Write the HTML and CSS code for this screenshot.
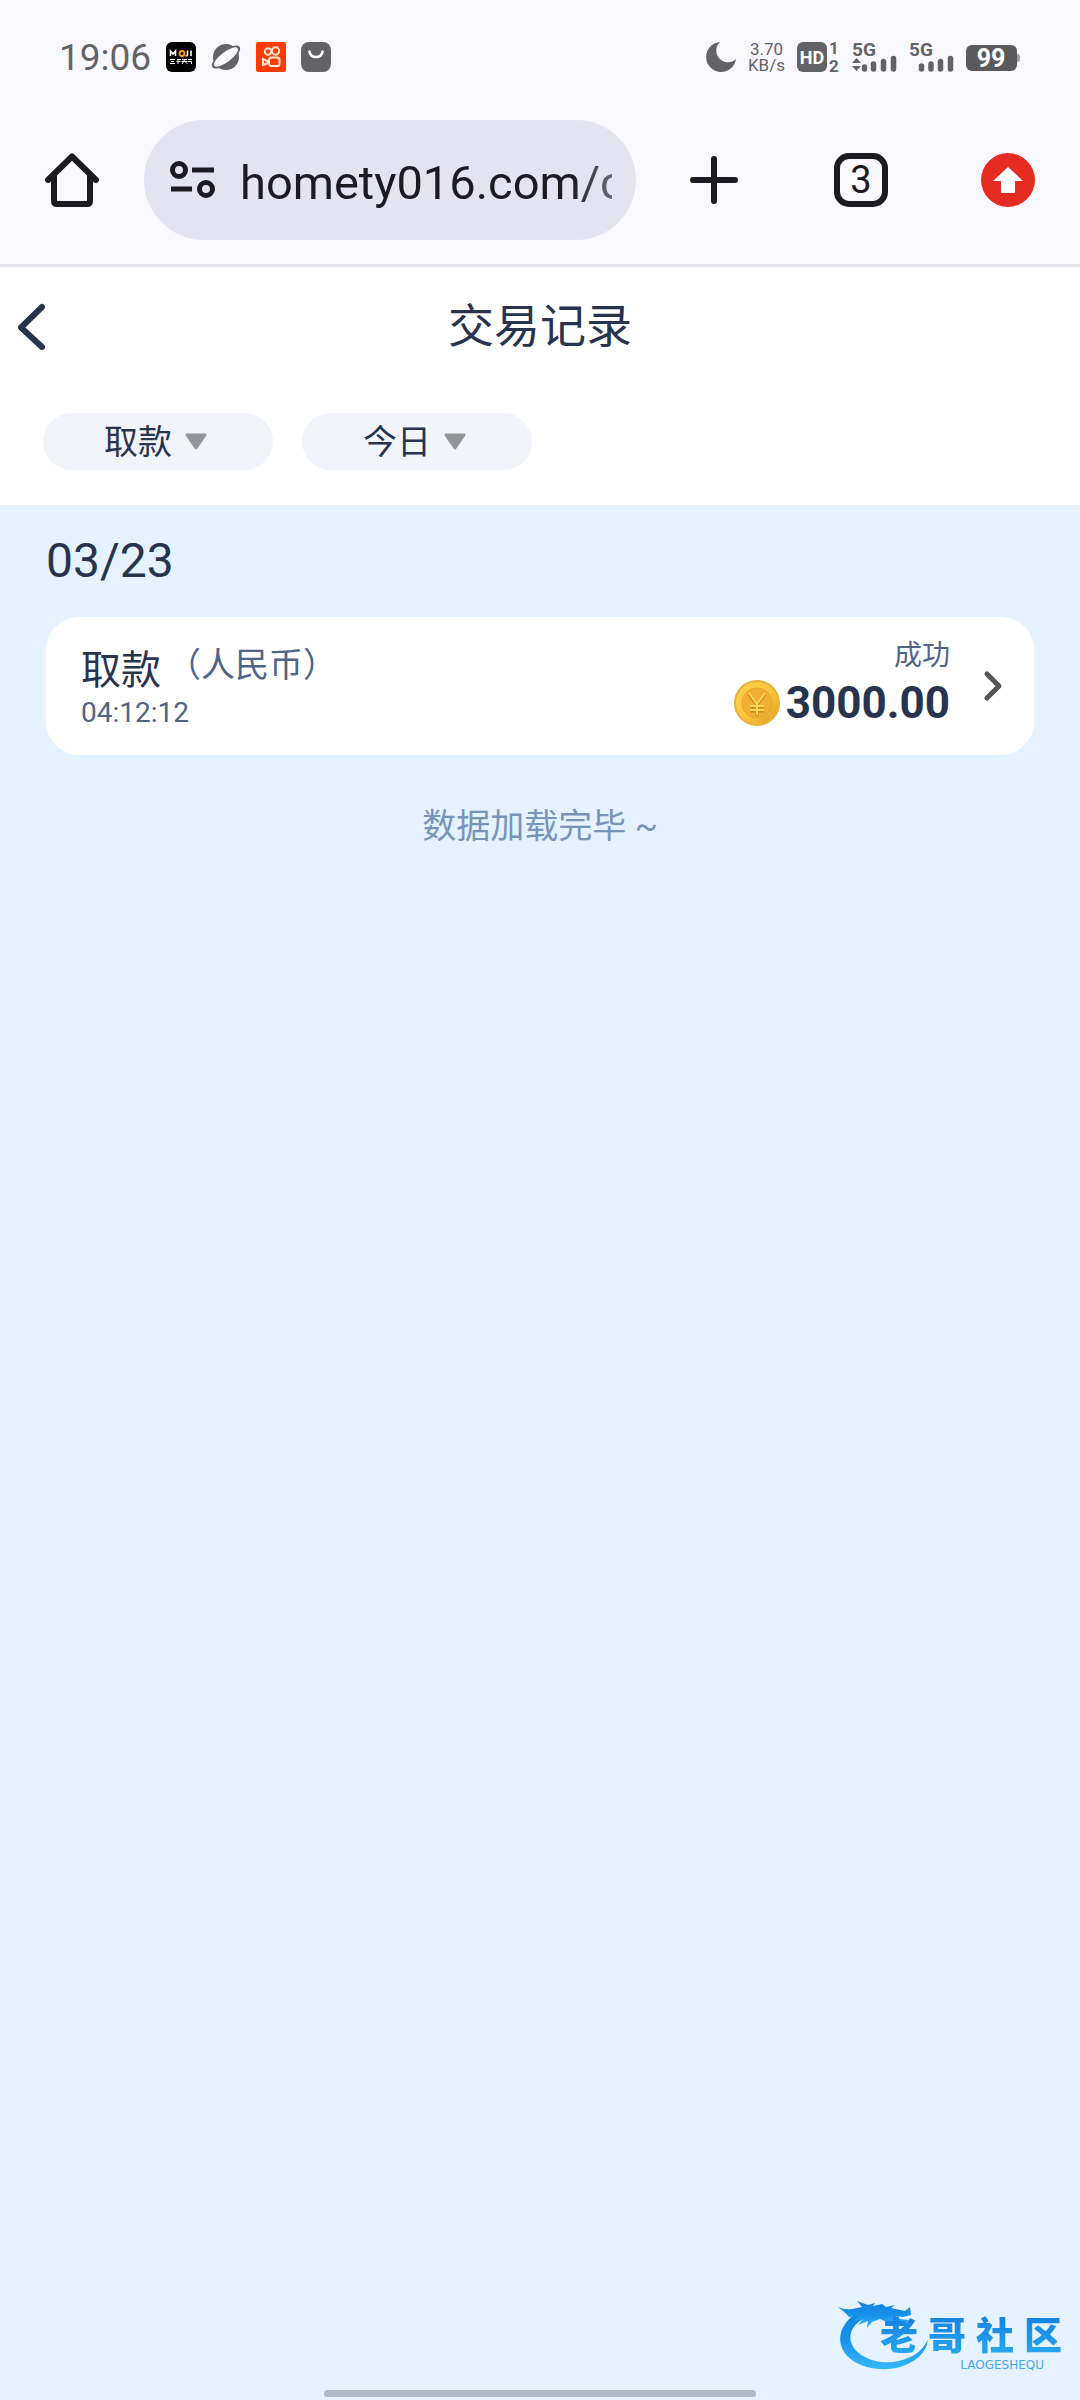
FILE: index.html
```
<!DOCTYPE html>
<html lang="zh-CN">
<head>
    <meta charset="UTF-8">
    <meta name="viewport" content="width=device-width, initial-scale=1.0">
    <title>交易记录</title>
    <link rel="stylesheet" href="styles.css">
</head>
<body>
    <div class="screen">
        <div class="status-bar">
            <div class="status-group">
                <span class="clock">19:06</span>
                <svg width="30" height="30" viewBox="0 0 30 30">
                    <rect width="30" height="30" rx="6" fill="#000"/>
                    <path d="M4.500 14V9l2.500 3 2.500-3v5M21.500 8.500v4.500q0 1-2 1M25 8.500V14" fill="none" stroke="#fff" stroke-width="1.600"/>
                    <circle cx="16" cy="11.500" r="2.500" fill="none" stroke="#f39a1f" stroke-width="2"/>
                    <path d="M4 17.500h5M5 19.500h3M4 21.500h5M11 17.500h4M10.500 19.500h4M12 17v5M16 17.500h5M15.500 19.500h6M18.500 18l-2.500 4M18.500 19l3 3M22 17.500h4M22 19.500h3.500v2.500" fill="none" stroke="#fff" stroke-width="1"/>
                </svg>
                <svg width="30" height="30" viewBox="0 0 30 30">
                    <circle cx="15" cy="15" r="13" fill="#636366"/>
                    <ellipse cx="15" cy="15" rx="17" ry="6.500" transform="rotate(-37 15 15)" fill="#636366"/>
                    <ellipse cx="15" cy="15" rx="14.500" ry="5" transform="rotate(-37 15 15)" fill="#faf8ff"/>
                </svg>
                <svg width="30" height="30" viewBox="0 0 30 30">
                    <rect width="30" height="30" rx="2" fill="#fe3b03"/>
                    <g fill="none" stroke="#ffe9d6" stroke-width="2">
                        <circle cx="12" cy="9.500" r="3.200"/>
                        <circle cx="19.500" cy="9" r="3.700"/>
                        <rect x="13" y="15.500" width="10.500" height="8.500" rx="2.500"/>
                        <path d="M12 19.500l-5-2.500v6l5-2z"/>
                    </g>
                </svg>
                <svg width="30" height="30" viewBox="0 0 30 30">
                    <rect width="30" height="30" rx="8" fill="#636366"/>
                    <path d="M8.500 9.500a6.500 5.500 0 0 0 13 0" fill="none" stroke="#fff" stroke-width="2.600" stroke-linecap="round"/>
                </svg>
            </div>
            <div class="status-group status-right">
                <svg width="30" height="30" viewBox="0 0 30 30">
                    <path d="M14 0A15 15 0 1 0 30 17A11.500 11.500 0 0 1 14 0z" fill="#636366"/>
                </svg>
                <span class="net-speed">3.70<br>KB/s</span>
                <svg width="43" height="30" viewBox="0 0 43 30">
                    <rect width="30" height="30" rx="6" fill="#636366"/>
                    <text class="glyph" x="15" y="22" font-size="18" text-anchor="middle" fill="#fff">HD</text>
                    <text class="glyph" x="37" y="12" font-size="17" text-anchor="middle" fill="#636366">1</text>
                    <text class="glyph" x="37" y="30" font-size="17" text-anchor="middle" fill="#636366">2</text>
                </svg>
                <svg width="45" height="30" viewBox="0 0 45 30">
                    <text class="glyph" x="0" y="14" font-size="19" fill="#636366">5G</text>
                    <path d="M0 21l4.500-5 4.500 5zM0 24h9l-4.500 5z" fill="#636366"/>
                    <path d="M12.500 25v2M21.500 22v5M31.500 19.500v7.500M41.500 16.500v10.500" stroke="#636366" stroke-width="5.500" stroke-linecap="round"/>
                </svg>
                <svg width="45" height="30" viewBox="0 0 45 30">
                    <text class="glyph" x="0" y="14" font-size="19" fill="#636366">5G</text>
                    <path d="M12.500 24v3M22 22v5M31.500 19.500v7.500M41.500 16.500v10.500" stroke="#636366" stroke-width="5.500" stroke-linecap="round"/>
                </svg>
                <svg width="54" height="30" viewBox="0 0 54 30">
                    <rect x="47" y="12" width="7" height="8" rx="2" fill="#a5a5a8"/>
                    <rect y="3" width="51" height="26" rx="6" fill="#5a5a5c"/>
                    <text class="glyph" x="25" y="25" font-size="25" text-anchor="middle" fill="#fff">99</text>
                </svg>
            </div>
        </div>

        <div class="toolbar">
            <button class="tool-btn" aria-label="主页">
                <svg width="54" height="54" viewBox="0 0 54 54">
                    <path d="M3 27L27 3.500L51 27M9 22v26q0 3 3 3h30q3 0 3-3V22" fill="none" stroke="#1b1b21" stroke-width="6" stroke-linecap="round" stroke-linejoin="round"/>
                </svg>
            </button>
            <div class="address">
                <svg width="46" height="40" viewBox="0 0 46 40">
                    <g fill="none" stroke="#1b1b21" stroke-width="5">
                        <circle cx="9" cy="10" r="6.500"/>
                        <circle cx="36" cy="29" r="6.500"/>
                        <path d="M22 10h22M1 29h21"/>
                    </g>
                </svg>
                <input class="address-input" type="text" value="homety016.com/c" aria-label="网址">
            </div>
            <div class="actions">
                <button class="tool-btn" aria-label="新标签页">
                    <svg width="48" height="48" viewBox="0 0 48 48">
                        <path d="M24 3v42M3 24h42" stroke="#1b1b21" stroke-width="6" stroke-linecap="round"/>
                    </svg>
                </button>
                <button class="tool-btn" aria-label="标签页"><span class="tab-count">3</span></button>
                <button class="tool-btn" aria-label="更新">
                    <svg width="54" height="54" viewBox="0 0 54 54">
                        <circle cx="27" cy="27" r="27" fill="#e52b22"/>
                        <path d="M27 14l15 14h-8v12H20V28h-8z" fill="#fff"/>
                    </svg>
                </button>
            </div>
        </div>

        <header class="header">
            <div class="title-bar">
                <button class="back-btn" aria-label="返回">
                    <svg width="28" height="48" viewBox="0 0 28 48">
                        <path d="M25 4L4 24.500L25 44" fill="none" stroke="#28344e" stroke-width="6" stroke-linecap="round" stroke-linejoin="round"/>
                    </svg>
                </button>
                <h1>交易记录</h1>
            </div>
            <div class="filters">
                <div class="filter">
                    <select class="filter-select" aria-label="类型">
                        <option>取款</option>
                        <option>存款</option>
                    </select>
                    <svg class="filter-arrow" width="24" height="18" viewBox="0 0 24 18">
                        <path d="M3 2h18L12 15z" fill="#929698" stroke="#929698" stroke-width="3" stroke-linejoin="round"/>
                    </svg>
                </div>
                <div class="filter">
                    <select class="filter-select" aria-label="日期">
                        <option>今日</option>
                        <option>昨日</option>
                    </select>
                    <svg class="filter-arrow" width="24" height="18" viewBox="0 0 24 18">
                        <path d="M3 2h18L12 15z" fill="#929698" stroke="#929698" stroke-width="3" stroke-linejoin="round"/>
                    </svg>
                </div>
            </div>
        </header>

        <main class="records">
            <h2 class="date">03/23</h2>
            <a class="record" href="#">
                <div class="record-info">
                    <div class="record-name">取款<span class="currency">（人民币）</span></div>
                    <div class="record-time">04:12:12</div>
                </div>
                <div class="record-result">
                    <div class="record-status">成功</div>
                    <div class="record-amount">
                        <svg width="46" height="46" viewBox="0 0 46 46">
                            <defs>
                                <linearGradient id="coin" x1="0" y1="0" x2="1" y2="1">
                                    <stop offset="0" stop-color="#fbd448"/>
                                    <stop offset="0.5" stop-color="#fcc63f"/>
                                    <stop offset="1" stop-color="#dda01e"/>
                                </linearGradient>
                                <linearGradient id="coinFace" x1="0" y1="0" x2="1" y2="1">
                                    <stop offset="0" stop-color="#f6ae35"/>
                                    <stop offset="1" stop-color="#efb02f"/>
                                </linearGradient>
                            </defs>
                            <circle cx="23" cy="23" r="22" fill="url(#coin)" stroke="#e6b23c" stroke-width="2"/>
                            <circle cx="23" cy="23" r="15" fill="url(#coinFace)" stroke="#eaa42c"/>
                            <path d="M15 14l8 11 8-11M23 25v11M16 27h14M16 31h14" fill="none" stroke="#c98a1c" stroke-width="3"/>
                            <path d="M15 13l8 11 8-11M23 24v11M16 26h14M16 30h14" fill="none" stroke="#fdd956" stroke-width="2"/>
                        </svg>
                        <span>3000.00</span>
                    </div>
                </div>
                <svg width="18" height="30" viewBox="0 0 18 30">
                    <path d="M3 3l12 12L3 27" fill="none" stroke="#555" stroke-width="5" stroke-linecap="round" stroke-linejoin="round"/>
                </svg>
            </a>
            <p class="load-end">数据加载完毕 ~</p>
        </main>

        <div class="home-bar"></div>

        <div class="watermark">
            <svg class="dragon" width="96" height="72" viewBox="0 0 96 72">
                <defs>
                    <linearGradient id="dragonFill" x1="0" y1="0" x2="0" y2="1">
                        <stop offset="0" stop-color="#1583e0"/>
                        <stop offset="0.5" stop-color="#1690ea"/>
                        <stop offset="1" stop-color="#35b8f8"/>
                    </linearGradient>
                </defs>
                <g fill="url(#dragonFill)">
                    <path d="M28 8C7 17-3 34 5 50C13 66 40 73 62 67C78 62 88 53 90 40C83 53 71 60 55 62C35 64 17 55 13 42C10 29 20 17 42 14L40 7z"/>
                    <path d="M0 7q8 4 19 1l5-1-5-6 11 4 7-2-2 3 9-2 4 3 9-2-4 3 14 3 5-4 1 8-8 2-8-1 5 3 9 1-4 4-16-1-9-4-8 3-5 6 1-7-10 4 5-6-10 2 6-5-10 1Q8 13 0 7z"/>
                </g>
            </svg>
            <div class="watermark-text">
                <div class="watermark-name"><span>老</span><span>哥</span><span>社</span><span>区</span></div>
                <div class="watermark-latin">LAOGESHEQU</div>
            </div>
        </div>
    </div>
</body>
</html>
```
FILE: styles.css
```
/* Reset */
* {
    margin: 0;
    padding: 0;
    box-sizing: border-box;
}

body {
    font-family: Roboto, 'Noto Sans CJK SC', sans-serif;
    background-color: #e5f2ff;
    color: #28344e;
}

button {
    border: none;
    background: none;
    font: inherit;
    color: inherit;
    cursor: pointer;
}

svg {
    display: block;
    flex-shrink: 0;
    overflow: visible;
}

.screen {
    position: relative;
    min-height: 100vh;
    display: flex;
    flex-direction: column;
}

/* Phone status bar */
.status-bar {
    display: flex;
    justify-content: space-between;
    align-items: center;
    height: 114px;
    padding: 0 60px 0 59px;
    background-color: #faf8ff;
    color: #636366;
}

.status-group {
    display: flex;
    align-items: center;
    gap: 15px;
}

.status-right {
    gap: 12px;
}

.clock {
    font-size: 37px;
}

.net-speed {
    font-size: 17px;
    line-height: 16px;
    text-align: center;
}

.glyph {
    font-weight: 700;
}

/* Browser toolbar */
.toolbar {
    display: flex;
    align-items: center;
    padding: 6px 0 24px;
    background-color: #faf8ff;
    border-bottom: 3px solid #e4e2ec;
}

.tool-btn {
    display: flex;
    justify-content: center;
    align-items: center;
    width: 144px;
    height: 120px;
}

.address {
    flex: 1;
    min-width: 0;
    display: flex;
    align-items: center;
    gap: 24px;
    height: 120px;
    padding: 0 24px 0 26px;
    border-radius: 60px;
    background-color: #e4e4f1;
}

.address-input {
    flex: 1;
    min-width: 0;
    height: 72px;
    padding-top: 4px;
    border: none;
    outline: none;
    background: none;
    font-family: inherit;
    font-size: 47px;
    color: #1b1b21;
    -webkit-mask-image: linear-gradient(to left, rgba(0, 0, 0, 0.6), #000 40px);
    mask-image: linear-gradient(to left, rgba(0, 0, 0, 0.6), #000 40px);
}

.actions {
    display: flex;
    gap: 3px;
    margin-left: 6px;
}

.tab-count {
    display: flex;
    justify-content: center;
    align-items: center;
    width: 54px;
    height: 54px;
    border: 6px solid #1b1b21;
    border-radius: 15px;
    font-size: 38px;
    color: #1b1b21;
}

/* Page header */
.header {
    background-color: #fff;
    padding-bottom: 35px;
}

.title-bar {
    display: grid;
    grid-template-columns: 64px 1fr 64px;
    align-items: center;
    height: 120px;
}

.title-bar h1 {
    padding-bottom: 10px;
    font-size: 46px;
    font-weight: 400;
    text-align: center;
}

.back-btn {
    display: flex;
    align-items: center;
    height: 100%;
    padding-left: 17px;
}

.filters {
    display: flex;
    gap: 29px;
    padding: 26px 43px 0;
}

.filter {
    display: grid;
    align-items: center;
    width: 230px;
    border-radius: 29px;
    background-color: #f1f5fb;
}

.filter-select {
    grid-area: 1 / 1;
    width: 100%;
    height: 57px;
    padding-left: 61px;
    border: none;
    outline: none;
    border-radius: 29px;
    appearance: none;
    background: none;
    font-family: inherit;
    font-size: 34px;
    color: inherit;
}

.filter-arrow {
    grid-area: 1 / 1;
    justify-self: end;
    margin-right: 65px;
    pointer-events: none;
}

/* Record list */
.records {
    padding: 0 46px;
}

.date {
    font-size: 48px;
    font-weight: 400;
    line-height: 112px;
}

.record {
    display: flex;
    align-items: center;
    min-height: 138px;
    padding: 0 32px 0 35px;
    border-radius: 33px;
    background-color: #fff;
    color: inherit;
    text-decoration: none;
}

.record-info {
    flex: 1;
    padding-top: 4px;
}

.record-name {
    display: flex;
    align-items: flex-start;
    gap: 6px;
    font-size: 40px;
    line-height: 50px;
}

.currency {
    font-size: 34px;
    line-height: 38px;
    color: #506488;
}

.record-time {
    font-size: 28px;
    line-height: 34px;
    color: #506488;
}

.record-result {
    margin-right: 34px;
    text-align: right;
}

.record-status {
    font-size: 28px;
    line-height: 34px;
    color: #506488;
}

.record-amount {
    display: flex;
    align-items: center;
    gap: 6px;
    font-size: 44px;
    font-weight: 700;
    line-height: 60px;
}

.load-end {
    padding: 50px 0;
    font-size: 34px;
    line-height: 42px;
    text-align: center;
    color: #7894b8;
}

/* Gesture bar */
.home-bar {
    width: 40%;
    height: 7px;
    margin: auto auto 3px;
    border-radius: 4px;
    background-color: #afbac7;
}

/* Community logo over the page corner */
.watermark {
    position: absolute;
    right: 18px;
    bottom: 28px;
    display: flex;
    align-items: flex-end;
}

.dragon {
    margin-right: -54px;
}

.watermark-text {
    width: 182px;
}

.watermark-name {
    display: flex;
    justify-content: space-between;
    font-size: 38px;
    font-weight: 900;
    line-height: 44px;
    color: transparent;
    background: linear-gradient(#1480de, #28aaf2);
    -webkit-background-clip: text;
    background-clip: text;
}

.watermark-latin {
    padding-right: 18px;
    font-family: 'DejaVu Sans', sans-serif;
    font-size: 12px;
    line-height: 14px;
    text-align: right;
    color: #4aa5e8;
}
```
